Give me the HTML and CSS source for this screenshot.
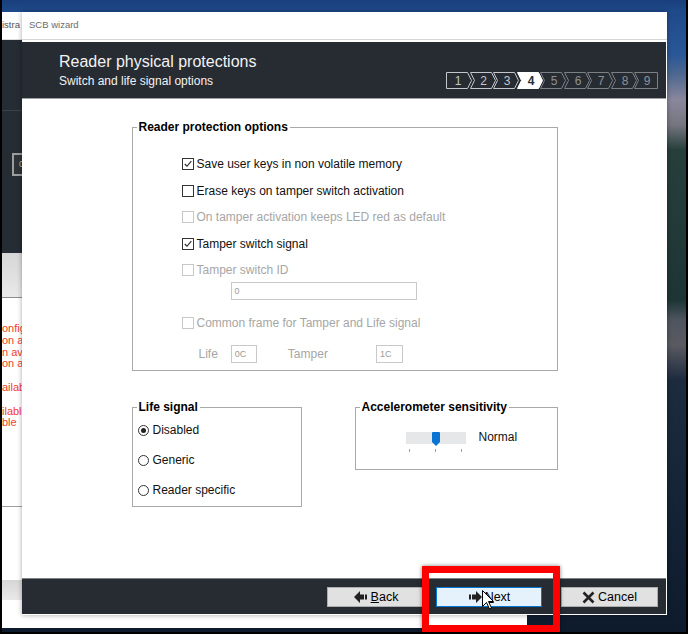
FILE: index.html
```html
<!DOCTYPE html>
<html>
<head>
    <meta charset="UTF-8">
    <title>SCB wizard</title>
    <link rel="stylesheet" href="styles.css">
</head>
<body>
<div id="screen">
    <div id="desktop"></div>

    <!-- application window behind the wizard -->
    <div id="bg-app">
        <div class="bg-title">istra</div>
        <div class="bg-dark">
            <div class="bg-tabs"></div>
            <div class="bg-field">0</div>
        </div>
        <div class="bg-band"></div>
        <div class="bg-log">
            <div>onfiguration</div>
            <div>on available</div>
            <div>n available</div>
            <div>on available</div>
            <div>&nbsp;</div>
            <div>ailable</div>
            <div>&nbsp;</div>
            <div>ilable</div>
            <div>ble</div>
        </div>
        <div class="bg-rest"></div>
        <div class="bg-band low"></div>
        <div class="bg-foot"></div>
    </div>

    <div id="wizard">
        <div class="title-bar">SCB wizard</div>

        <div id="header-container">
            <div class="heading">
                <div class="page-title">Reader physical protections</div>
                <div class="page-sub">Switch and life signal options</div>
            </div>
            <svg class="steps" width="214" height="17" viewBox="0 0 214 17">
                <g class="done">
                    <polygon points="1.5,0.5 22.5,0.5 26.5,8.5 22.5,16.5 1.5,16.5"/>
                    <polygon points="25.5,0.5 46.5,0.5 50.5,8.5 46.5,16.5 25.5,16.5 29.5,8.5"/>
                    <polygon points="48.5,0.5 69.5,0.5 73.5,8.5 69.5,16.5 48.5,16.5 52.5,8.5"/>
                    <text x="13" y="13">1</text>
                    <text x="38.5" y="13">2</text>
                    <text x="62" y="13">3</text>
                </g>
                <g class="current">
                    <polygon points="72.5,0.5 93.5,0.5 97.5,8.5 93.5,16.5 72.5,16.5 76.5,8.5"/>
                    <text x="86" y="13">4</text>
                </g>
                <g class="todo">
                    <polygon points="95.5,0.5 116.5,0.5 120.5,8.5 116.5,16.5 95.5,16.5 99.5,8.5"/>
                    <polygon points="119.5,0.5 140.5,0.5 144.5,8.5 140.5,16.5 119.5,16.5 123.5,8.5"/>
                    <polygon points="142.5,0.5 163.5,0.5 167.5,8.5 163.5,16.5 142.5,16.5 146.5,8.5"/>
                    <polygon points="166.5,0.5 187.5,0.5 191.5,8.5 187.5,16.5 166.5,16.5 170.5,8.5"/>
                    <polygon points="189.5,0.5 212.5,0.5 212.5,16.5 189.5,16.5 193.5,8.5"/>
                    <text x="109" y="13">5</text>
                    <text x="133" y="13">6</text>
                    <text x="156" y="13">7</text>
                    <text x="180" y="13">8</text>
                    <text x="202" y="13">9</text>
                </g>
            </svg>
        </div>

        <div id="content-container">
            <fieldset class="group reader-group">
                <legend>Reader protection options</legend>
                <div class="reader-body">
                    <label class="opt">
                        <span class="cb"><svg width="10" height="10" viewBox="0 0 10 10"><polyline points="1.8,5 4,7.3 8.3,2.2"/></svg></span>
                        Save user keys in non volatile memory
                    </label>
                    <label class="opt">
                        <span class="cb"></span>
                        Erase keys on tamper switch activation
                    </label>
                    <label class="opt disabled">
                        <span class="cb"></span>
                        On tamper activation keeps LED red as default
                    </label>
                    <label class="opt">
                        <span class="cb"><svg width="10" height="10" viewBox="0 0 10 10"><polyline points="1.8,5 4,7.3 8.3,2.2"/></svg></span>
                        Tamper switch signal
                    </label>
                    <label class="opt disabled">
                        <span class="cb"></span>
                        Tamper switch ID
                    </label>
                    <div class="field id-field">0</div>
                    <label class="opt disabled frame-opt">
                        <span class="cb"></span>
                        Common frame for Tamper and Life signal
                    </label>
                    <div class="frame-row">
                        <span class="frame-label">Life</span>
                        <span class="field life-field">0C</span>
                        <span class="frame-label tamper-label">Tamper</span>
                        <span class="field tamper-field">1C</span>
                    </div>
                </div>
            </fieldset>

            <div class="bottom-row">
                <fieldset class="group life-group">
                    <legend>Life signal</legend>
                    <div class="life-body">
                        <label class="opt"><span class="rb on"></span>Disabled</label>
                        <label class="opt"><span class="rb"></span>Generic</label>
                        <label class="opt"><span class="rb"></span>Reader specific</label>
                    </div>
                </fieldset>

                <fieldset class="group accel-group">
                    <legend>Accelerometer sensitivity</legend>
                    <div class="accel-body">
                        <div class="slider">
                            <div class="track">
                                <svg class="thumb" width="8" height="14" viewBox="0 0 8 14"><path d="M1 0 H7 Q8 0 8 1 V10 L4 14 L0 10 V1 Q0 0 1 0 Z"/></svg>
                            </div>
                            <div class="ticks"><span></span><span></span><span></span></div>
                        </div>
                        <span class="level">Normal</span>
                    </div>
                </fieldset>
            </div>
        </div>

        <div id="footer-container">
            <button class="nav-button back">
                <svg width="14" height="12" viewBox="0 0 14 12"><path d="M0 6 L6 0 V12 Z M6 3.5 H10 V8.5 H6 Z M11 3.5 H13 V8.5 H11 Z"/></svg>
                <span><u>B</u>ack</span>
            </button>
            <button class="nav-button next">
                <svg width="14" height="12" viewBox="0 0 14 12"><path d="M14 6 L8 0 V12 Z M8 3.5 H4 V8.5 H8 Z M3 3.5 H1 V8.5 H3 Z"/></svg>
                <span><u>N</u>ext</span>
            </button>
            <button class="nav-button cancel">
                <svg width="13" height="13" viewBox="0 0 13 13"><path d="M1.5 1.5 L11.5 11.5 M11.5 1.5 L1.5 11.5"/></svg>
                <span>Cancel</span>
            </button>
        </div>
    </div>

    <!-- annotation over the screenshot -->
    <div class="highlight"></div>
    <svg class="cursor" width="13" height="20" viewBox="0 0 13 20">
        <path d="M0.5 0.5 V16.5 L4.5 12.5 L7.5 19 L9.5 18 L6.5 11.5 H11.5 Z"/>
    </svg>
</div>
</body>
</html>
```

FILE: styles.css
```css
* {
    box-sizing: border-box;
}

body {
    margin: 0;
    background-color: #000;
    font-family: "Liberation Sans", Arial, sans-serif;
    font-size: 12px;
    color: #111;
}

#screen {
    position: relative;
    width: 688px;
    height: 634px;
    overflow: hidden;
    background-color: #000;
}

#desktop {
    position: absolute;
    left: 2px;
    top: 0;
    width: 684px;
    height: 632px;
    background: linear-gradient(to bottom,
        #1a3f7c 0, #1f4a8a 12px, #2a5897 55px, #4f6890 75px,
        #8a879c 100px, #75767f 125px, #263f3b 150px, #1d3535 300px,
        #4e5560 320px, #5a5a62 345px, #1c2b3e 380px, #0d1b2d 634px);
}

/* background application */
#bg-app {
    position: absolute;
    left: 2px;
    top: 12px;
    width: 525px;
    height: 616px;
    background-color: #fff;
    display: flex;
    flex-direction: column;
}

.bg-title {
    height: 28px;
    line-height: 25px;
    font-size: 9.5px;
    color: #555;
    border-bottom: 1px solid #ddd;
}

.bg-dark {
    height: 213px;
    background-color: #262c33;
}

.bg-tabs {
    height: 71px;
    border-bottom: 1px solid #3c424a;
}

.bg-field {
    width: 30px;
    height: 23px;
    margin: 42px 0 0 10px;
    border: 2px solid #9d9d9d;
    background-color: #2e3338;
    color: #bbb;
    font-size: 9px;
    line-height: 19px;
    padding-left: 5px;
}

.bg-band {
    height: 45px;
    background: linear-gradient(#d6d6d6, #e9e9e9);
    border-bottom: 1px solid #8c8c8c;
}

.bg-band.low {
    height: 20px;
    border-bottom: none;
}

.bg-log {
    height: 208px;
    padding-top: 25px;
    color: #f4401f;
    font-size: 11px;
    line-height: 11.8px;
}

.bg-rest {
    height: 74px;
    border-top: 1px solid #a0a0a0;
}

.bg-foot {
    flex: 1;
}

/* wizard dialog */
#wizard {
    position: absolute;
    left: 22px;
    top: 12px;
    width: 645px;
    height: 603px;
    background-color: #fff;
    display: flex;
    flex-direction: column;
    box-shadow: 0 0 5px rgba(0, 0, 0, 0.35);
}

.title-bar {
    height: 28px;
    margin-bottom: 2px;
    padding-left: 7px;
    line-height: 25px;
    font-size: 9.5px;
    color: #6b6b6b;
    border-bottom: 1px solid #d6d6d6;
}

#header-container {
    height: 57px;
    margin-right: 1px;
    padding: 11px 7px 0 37px;
    display: flex;
    justify-content: space-between;
    align-items: flex-start;
    background-color: #272c33;
    border-bottom: 1px solid #9da1a5;
    color: #f2f2f2;
}

.page-title {
    font-size: 16px;
    line-height: 18px;
}

.page-sub {
    margin-top: 3px;
    font-size: 12px;
    line-height: 14px;
}

.steps {
    margin-top: 19px;
    font-size: 12px;
}

.steps text {
    text-anchor: middle;
    font-family: "Liberation Sans", Arial, sans-serif;
}

.steps .done polygon {
    fill: none;
    stroke: #c3c6ca;
}

.steps .done text {
    fill: #c3c6ca;
}

.steps .current polygon {
    fill: #fff;
    stroke: #fff;
}

.steps .current text {
    fill: #272c33;
    font-weight: bold;
}

.steps .todo polygon {
    fill: none;
    stroke: #7b8085;
}

.steps .todo text {
    fill: #8d9196;
}

#content-container {
    flex: 1;
    padding-top: 21px;
    display: flex;
    flex-direction: column;
    align-items: center;
}

/* group boxes */
.group {
    margin: 0;
    padding: 0;
    min-width: 0;
    border: 1px solid #a9a9a9;
}

.group legend {
    margin-left: 4px;
    padding: 0 2px;
    font-weight: bold;
    line-height: 14px;
    color: #000;
}

.reader-group {
    width: 426px;
}

.reader-body {
    padding: 22px 0 7px 49px;
    display: flex;
    flex-direction: column;
    align-items: flex-start;
}

.opt {
    height: 16px;
    display: flex;
    align-items: center;
    gap: 3px;
    color: #111;
}

.reader-body .opt + .opt {
    margin-top: 10.5px;
}

.opt.disabled {
    color: #a6a6a6;
}

.cb {
    width: 12px;
    height: 12px;
    flex-shrink: 0;
    border: 1px solid #333;
    background-color: #fff;
    display: flex;
}

.cb polyline {
    fill: none;
    stroke: #222;
    stroke-width: 1.1;
}

.opt.disabled .cb {
    border-color: #c8c8c8;
}

.field {
    height: 18px;
    border: 1px solid #c9c9c9;
    padding-left: 3px;
    font-size: 9px;
    line-height: 16px;
    color: #9a9a9a;
}

.id-field {
    width: 186px;
    margin: 4px 0 0 49px;
}

.reader-body .frame-opt {
    margin-top: 15px;
}

.frame-row {
    margin-top: 14px;
    padding-left: 17px;
    display: flex;
    align-items: center;
    color: #a6a6a6;
}

.life-field {
    width: 26px;
    margin-left: 13px;
}

.tamper-label {
    margin-left: 31px;
}

.tamper-field {
    width: 27px;
    margin-left: 48px;
}

.bottom-row {
    width: 426px;
    margin-top: 29px;
    display: flex;
    justify-content: space-between;
    align-items: flex-start;
}

.life-group {
    width: 170px;
}

.life-body {
    padding: 8px 0 8px 5px;
    display: flex;
    flex-direction: column;
    gap: 14px;
}

.rb {
    width: 11px;
    height: 11px;
    flex-shrink: 0;
    margin-right: 1px;
    border: 1px solid #333;
    border-radius: 50%;
    display: flex;
    align-items: center;
    justify-content: center;
}

.rb.on::after {
    content: "";
    width: 5px;
    height: 5px;
    border-radius: 50%;
    background-color: #222;
}

.accel-group {
    width: 203px;
}

.accel-body {
    padding: 18px 0 17px 50px;
    display: flex;
    align-items: flex-start;
}

.track {
    position: relative;
    width: 60px;
    height: 12px;
    background-color: #e6e7e8;
}

.thumb {
    position: absolute;
    left: 26px;
    top: 0;
    fill: #0a74d3;
}

.ticks {
    margin-top: 5px;
    height: 3px;
    padding: 0 4px 0 3px;
    display: flex;
    justify-content: space-between;
}

.ticks span {
    width: 1px;
    background-color: #a0a0a0;
}

.level {
    margin: -2px 0 0 13px;
    line-height: 14px;
}

/* footer buttons */
#footer-container {
    height: 36px;
    margin: 0 1px 1px 0;
    padding: 8px 8px 0 0;
    display: flex;
    justify-content: flex-end;
    align-items: flex-start;
    background-color: #272c33;
    border-top: 1px solid #7e8388;
}

.nav-button {
    height: 20px;
    padding: 0;
    display: flex;
    align-items: center;
    justify-content: center;
    gap: 3px;
    border: 1px solid #adadad;
    background-color: #e1e1e1;
    font-family: "Liberation Sans", Arial, sans-serif;
    font-size: 12.5px;
    color: #000;
}

.nav-button svg {
    fill: #222;
}

.back {
    width: 98px;
    margin-right: 11px;
}

.next {
    width: 106px;
    margin-right: 19px;
    background-color: #e5f1fb;
    border-color: #0078d7;
}

.cancel {
    width: 97px;
}

.cancel svg path {
    fill: none;
    stroke: #222;
    stroke-width: 2.6;
}

.highlight {
    position: absolute;
    left: 422px;
    top: 566px;
    width: 138px;
    height: 66px;
    border: 7px solid #f00;
    box-shadow: 0 0 4px rgba(0, 0, 0, 0.5);
}

.cursor {
    position: absolute;
    left: 482px;
    top: 590px;
}

.cursor path {
    fill: #fff;
    stroke: #000;
}
```
